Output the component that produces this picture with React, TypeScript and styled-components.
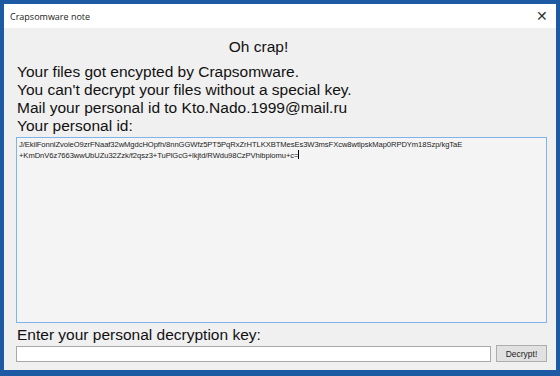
import React from 'react';
import styled, { createGlobalStyle } from 'styled-components';

const GlobalStyle = createGlobalStyle`
  html, body {
    margin: 0;
    padding: 0;
    width: 560px;
    height: 376px;
    overflow: hidden;
    background: #1c5aa3;
  }
`;

const Window = styled.div`
  box-sizing: border-box;
  width: 560px;
  height: 376px;
  border: 4px solid #1c5aa3;
  border-bottom-width: 6px;
  display: flex;
  flex-direction: column;
  background: #f0f0f0;
  font-family: 'Liberation Sans', Arial, sans-serif;
  color: #111;
`;

const TitleBar = styled.div`
  height: 24px;
  flex: none;
  background: #fff;
  display: flex;
  align-items: center;
  justify-content: space-between;
  padding: 0 8px 0 6px;
  font-family: 'Open Sans', 'Liberation Sans', sans-serif;
  font-size: 9px;
  color: #222;
`;

const CloseButton = styled.span`
  font-size: 14px;
  font-weight: 300;
  color: #333;
  line-height: 1;
`;

const Body = styled.div`
  flex: 1;
  display: flex;
  flex-direction: column;
  padding: 9px 9px 0 12px;
`;

const Heading = styled.div`
  text-align: center;
  font-size: 15.5px;
  line-height: 20px;
  margin-bottom: 6px;
  padding-right: 46px;
`;

const Line = styled.div`
  font-size: 15.5px;
  line-height: 18px;
  padding-left: 1px;
`;

const IdBox = styled.div`
  margin-top: 2px;
  height: 186px;
  flex: none;
  box-sizing: border-box;
  border: 1px solid #7eb4ea;
  background: #f4f4f4;
  padding: 2px 2px;
  font-size: 7.6px;
  line-height: 10px;
  letter-spacing: -0.06px;
  color: #222;
  white-space: pre;
`;

const Caret = styled.span`
  display: inline-block;
  width: 1px;
  height: 9px;
  background: #000;
  vertical-align: -1px;
`;

const KeyLabel = styled(Line)`
  margin-top: 4px;
  line-height: 16px;
`;

const KeyRow = styled.div`
  display: flex;
  align-items: center;
  gap: 5px;
  margin-top: 2px;
`;

const KeyInput = styled.input`
  flex: 1;
  height: 16px;
  box-sizing: border-box;
  border: 1px solid #a9a9a9;
  background: #fff;
  margin: 0;
  padding: 0 2px;
  outline: none;
`;

const DecryptButton = styled.button`
  width: 51px;
  height: 17px;
  box-sizing: border-box;
  border: 1px solid #adadad;
  background: #e1e1e1;
  font-family: 'Liberation Sans', Arial, sans-serif;
  font-size: 8.5px;
  color: #222;
  padding: 0;
  margin: 0;
`;

const personalId = [
  'J/EkilFonnlZvoleO9zrFNaaf32wMgdcHOpfh/8nnGGWfz5PT5PqRxZrHTLKXBTMesEs3W3msFXcw8wtlpskMap0RPDYm18Szp/kgTaE',
  '+KmDnV6z7663wwUbUZu32Zzk/f2qsz3+TuPlGcG+lkjtd/RWdu98CzPVhibpiomu+c=',
];

function App() {
  return (
    <>
      <GlobalStyle />
      <Window>
        <TitleBar>
          <span>Crapsomware note</span>
          <CloseButton>✕</CloseButton>
        </TitleBar>
        <Body>
          <Heading>Oh crap!</Heading>
          <Line>Your files got encypted by Crapsomware.</Line>
          <Line>You can't decrypt your files without a special key.</Line>
          <Line>Mail your personal id to Kto.Nado.1999@mail.ru</Line>
          <Line>Your personal id:</Line>
          <IdBox>
            {personalId[0]}
            {'\n'}
            {personalId[1]}
            <Caret />
          </IdBox>
          <KeyLabel>Enter your personal decryption key:</KeyLabel>
          <KeyRow>
            <KeyInput type="text" />
            <DecryptButton type="button">Decrypt!</DecryptButton>
          </KeyRow>
        </Body>
      </Window>
    </>
  );
}

export default App;
